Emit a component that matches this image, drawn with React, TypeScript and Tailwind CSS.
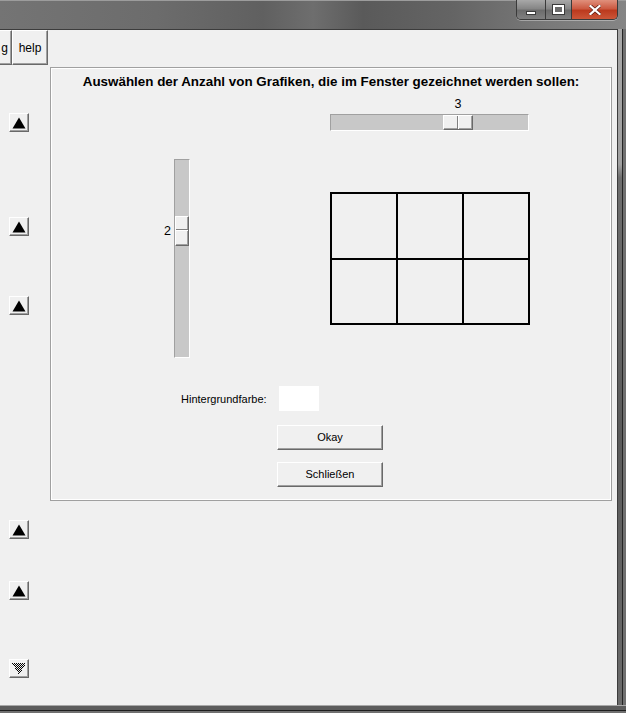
import React from "react";

const raised =
  "bg-[#f0f0f0] border border-t-white border-l-white border-r-[#696969] border-b-[#696969] shadow-[inset_-1px_-1px_0_#a0a0a0]";

function UpArrow({ className }: { className: string }) {
  return (
    <div className={`w-[20px] h-[19px] flex items-center justify-center shrink-0 ${raised} ${className}`}>
      <svg width="14" height="12" viewBox="0 0 14 12">
        <polygon points="7,0.5 13.5,11.5 0.5,11.5" fill="#000" />
      </svg>
    </div>
  );
}

function DownArrow({ className }: { className: string }) {
  return (
    <div className={`w-[20px] h-[19px] flex items-center justify-center shrink-0 ${raised} ${className}`}>
      <svg width="14" height="12" viewBox="0 0 14 12" shapeRendering="crispEdges">
        <defs>
          <pattern id="chk" width="2" height="2" patternUnits="userSpaceOnUse">
            <rect x="0" y="0" width="1" height="1" fill="#000" />
            <rect x="1" y="1" width="1" height="1" fill="#000" />
          </pattern>
        </defs>
        <polygon points="0,0 14,0 7,12" fill="url(#chk)" />
      </svg>
    </div>
  );
}

function TitleControls() {
  return (
    <div className="flex h-[20px] border border-t-0 border-[#3a3a3a] rounded-b-[5px] overflow-hidden shadow-[0_1px_0_rgba(255,255,255,0.35)]">
      <div className="w-[28px] h-full flex items-center justify-center bg-[linear-gradient(180deg,#a8a8a8_0%,#868686_45%,#6c6c6c_55%,#808080_100%)]">
        <div className="mt-[6px] w-[10px] h-[4px] bg-white border border-[#3a3a3a]" />
      </div>
      <div className="w-[26px] h-full flex items-center justify-center border-l border-[#3a3a3a] bg-[linear-gradient(180deg,#a8a8a8_0%,#868686_45%,#6c6c6c_55%,#808080_100%)]">
        <div className="w-[11px] h-[9px] border-2 border-white outline outline-1 outline-[#3a3a3a] bg-[#6a6a6a]" />
      </div>
      <div className="w-[46px] h-full flex items-center justify-center border-l border-[#3a3a3a] bg-[linear-gradient(180deg,#e0907c_0%,#cc5a42_45%,#bc3a1e_55%,#cc5638_100%)]">
        <svg width="12" height="10" viewBox="0 0 12 10">
          <path d="M1.5 1 L10.5 9 M10.5 1 L1.5 9" stroke="#5a1a10" strokeWidth="3.6" strokeLinecap="square" />
          <path d="M1.5 1 L10.5 9 M10.5 1 L1.5 9" stroke="#ffffff" strokeWidth="2.2" strokeLinecap="square" />
        </svg>
      </div>
    </div>
  );
}

export default function App() {
  return (
    <div className="w-[626px] h-[713px] flex flex-col overflow-hidden bg-[#6a6a6a] font-['Liberation_Sans',Arial,sans-serif] text-black">
      {/* Title bar */}
      <div className="h-[29px] shrink-0 flex justify-end pr-[8px] bg-[linear-gradient(90deg,#747474_0%,#6c6c6c_25%,#606060_42%,#6e6e6e_50%,#5a5a5a_58%,#646464_72%,#7a7a7a_88%,#858585_100%)] shadow-[inset_0_1px_0_#9c9c9c]">
        <TitleControls />
      </div>

      <div className="flex flex-1 min-h-0">
        {/* client area */}
        <div className="flex-1 flex flex-col bg-[#f0f0f0] border-t border-r border-[#3c3c3c]">
          {/* menu row */}
          <div className="h-[36px] flex items-start shrink-0">
            <div className={`w-[12px] h-[35px] flex items-center justify-end pr-[3px] text-[12px] ${raised} border-l-0`}>
              g
            </div>
            <div className={`w-[36px] h-[35px] flex items-center justify-center text-[12px] ${raised}`}>
              help
            </div>
          </div>

          <div className="flex flex-1 min-h-0">
            {/* left arrow column */}
            <div className="w-[50px] pl-[9px] flex flex-col shrink-0">
              <UpArrow className="mt-[47px]" />
              <UpArrow className="mt-[85px]" />
              <UpArrow className="mt-[60px]" />
              <UpArrow className="mt-[205px]" />
              <UpArrow className="mt-[42px]" />
              <DownArrow className="mt-[59px]" />
            </div>

            {/* panel */}
            <div className="mt-[1px] w-[562px] h-[434px] border border-[#a0a0a0] flex shrink-0">
              <div className="flex-1 border border-white flex flex-col">
                <div className="mt-[4px] h-[17px] leading-[17px] text-center text-[13.4px] font-bold">
                  Auswählen der Anzahl von Grafiken, die im Fenster gezeichnet werden sollen:
                </div>

                {/* horizontal scale */}
                <div className="ml-[278px] w-[199px] flex flex-col">
                  <div className="mt-[7px] h-[14px] flex">
                    <div className="ml-[113px] w-[30px] text-center text-[12.5px] leading-[14px]">3</div>
                  </div>
                  <div className="mt-[3px] h-[17px] bg-[#c8c8c8] border border-t-[#a0a0a0] border-l-[#a0a0a0] border-r-white border-b-white flex">
                    <div className={`ml-[112px] w-[30px] h-full flex ${raised}`}>
                      <div className="w-[14px] h-full border-r border-[#808080]" />
                      <div className="w-[1px] h-full bg-white" />
                    </div>
                  </div>
                </div>

                {/* vertical scale + grid */}
                <div className="mt-[28px] flex items-start">
                  <div className="w-[120px] mt-[57px] h-[30px] flex items-center justify-end pr-[1px] text-[12.5px]">
                    2
                  </div>
                  <div className="ml-[2px] w-[16px] h-[199px] bg-[#c8c8c8] border border-t-[#a0a0a0] border-l-[#a0a0a0] border-r-white border-b-white flex flex-col">
                    <div className={`mt-[56px] h-[30px] w-full flex flex-col ${raised}`}>
                      <div className="h-[13px] w-full border-b border-[#808080]" />
                      <div className="h-[1px] w-full bg-white" />
                    </div>
                  </div>
                  <svg className="ml-[140px] mt-[33px]" width="200" height="133" viewBox="0 0 200 133" shapeRendering="crispEdges">
                    <g stroke="#000" strokeWidth="2" fill="none">
                      <rect x="1" y="1" width="198" height="131" />
                      <line x1="67" y1="0" x2="67" y2="133" />
                      <line x1="133" y1="0" x2="133" y2="133" />
                      <line x1="0" y1="67" x2="200" y2="67" />
                    </g>
                  </svg>
                </div>

                {/* background colour */}
                <div className="mt-[28px] ml-[129px] flex items-center">
                  <div className="w-[98px] text-[11px] leading-[14px]">Hintergrundfarbe:</div>
                  <div className="w-[40px] h-[25px] bg-white" />
                </div>

                <div className={`mt-[14px] ml-[225px] w-[106px] h-[25px] flex items-center justify-center text-[11px] ${raised}`}>
                  Okay
                </div>
                <div className={`mt-[12px] ml-[225px] w-[106px] h-[25px] flex items-center justify-center text-[11px] ${raised}`}>
                  Schließen
                </div>
              </div>
            </div>
          </div>
        </div>

        {/* right frame */}
        <div className="w-[8px] shrink-0 flex">
          <div className="w-[4px] h-full bg-[linear-gradient(180deg,#a8a8a8_0%,#a0a0a0_20%,#6e6e6e_22%,#5a5a5a_60%,#6a6a6a_100%)]" />
          <div className="w-[1px] h-full bg-[#262626]" />
          <div className="w-[3px] h-full bg-[#707070]" />
        </div>
      </div>

      {/* bottom frame */}
      <div className="h-[8px] shrink-0 flex flex-col">
        <div className="h-[1px] bg-[#a8a8a8]" />
        <div className="h-[4px] bg-[#5c5c5c]" />
        <div className="h-[1px] bg-[#1e1e1e]" />
        <div className="h-[2px] bg-[#707070]" />
      </div>
    </div>
  );
}
